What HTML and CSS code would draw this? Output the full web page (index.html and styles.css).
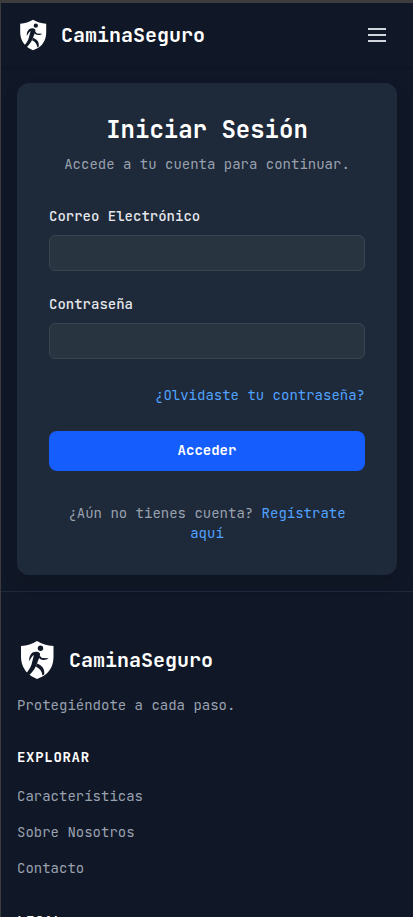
FILE: index.html
```html
<!DOCTYPE html>
<html lang="es">
<head>
  <meta charset="utf-8">
  <meta name="viewport" content="width=device-width, initial-scale=1">
  <title>CaminaSeguro</title>
  <link rel="stylesheet" href="styles.css">
</head>
<body>
  <svg width="0" height="0" class="sprite" aria-hidden="true">
    <symbol id="logo" viewBox="0 0 40 40">
      <path class="shield" d="M20 1C25 4 30 5.6 36.5 6V17C36.5 27 31 34 25.500 36.500L20 39L15 36.500C9 33 4 26 4 17V6C10.500 5.600 15 4 20 1Z"/>
      <circle class="figure" cx="23.500" cy="8.300" r="2.700"/>
      <path class="figure" d="M15.500 12.500C18 11.300 21 11.300 22.500 12.800C23.500 14 22.800 16 22.300 17.500L20 23.500C18.500 28 14 35 10 36.300L5 37C9 34.500 13 29 14.500 24.500C15.300 21.500 16 18.500 17 15C15.300 16 14.300 17.500 12.300 21.200C11.700 18 13 14.500 15.500 12.500Z"/>
      <path class="figure" d="M22.500 15.500L25 18L31.500 18.300C30 19.800 26 20.500 23.500 19.300L21.500 17.500Z"/>
      <path class="figure" d="M20 23.500C25 25.500 28 28.500 27.200 34.500L25.500 35.500C25 31.500 23 28.500 18.800 26.500Z"/>
    </symbol>
  </svg>

  <header class="header">
    <a class="brand" href="#">
      <svg class="logo" aria-hidden="true"><use href="#logo"/></svg>
      <span>CaminaSeguro</span>
    </a>
    <button class="menu" type="button" aria-label="Menú">
      <svg viewBox="0 0 24 24" width="24" height="24" aria-hidden="true"><path d="M3 6h18M3 12h18M3 18h18"/></svg>
    </button>
  </header>

  <main class="main">
    <section class="card">
      <h1>Iniciar Sesión</h1>
      <p class="subtitle">Accede a tu cuenta para continuar.</p>
      <form class="form">
        <div class="field">
          <label for="email">Correo Electrónico</label>
          <input id="email" type="email">
        </div>
        <div class="field">
          <label for="password">Contraseña</label>
          <input id="password" type="password">
        </div>
        <div class="forgot"><a href="#">¿Olvidaste tu contraseña?</a></div>
        <button class="submit" type="submit">Acceder</button>
      </form>
      <p class="signup">¿Aún no tienes cuenta? <a href="#">Regístrate aquí</a></p>
    </section>
  </main>

  <footer class="footer">
    <a class="brand brand-large" href="#">
      <svg class="logo" aria-hidden="true"><use href="#logo"/></svg>
      <span>CaminaSeguro</span>
    </a>
    <p class="tagline">Protegiéndote a cada paso.</p>
    <nav class="group">
      <h2>Explorar</h2>
      <ul>
        <li><a href="#">Características</a></li>
        <li><a href="#">Sobre Nosotros</a></li>
        <li><a href="#">Contacto</a></li>
      </ul>
    </nav>
    <section class="group">
      <h2>Legal</h2>
    </section>
  </footer>
</body>
</html>
```

FILE: styles.css
```css
*,
*::before,
*::after {
  box-sizing: border-box;
}

body {
  margin: 0;
  border-top: 3px solid #3c3c3c;
  border-left: 1px solid #3c3c3c;
  background: #101726;
  color: #fff;
  font-family: "JetBrains Mono", "DejaVu Sans Mono", "Liberation Mono", monospace;
  font-size: 14px;
  line-height: 18px;
}

h1,
h2,
p,
ul {
  margin: 0;
  padding: 0;
}

a {
  color: #51a2ff;
  text-decoration: none;
}

button,
input {
  font: inherit;
}

.sprite {
  display: block;
}

.shield {
  fill: #fff;
}

.figure {
  fill: #101726;
}

.header {
  display: flex;
  align-items: center;
  justify-content: space-between;
  height: 64px;
  padding: 0 16px;
  box-shadow: 0 1px 2px rgba(0, 0, 0, 0.15);
}

.brand {
  display: flex;
  align-items: center;
  gap: 12px;
  color: #fff;
  font-size: 20px;
  font-weight: 700;
  line-height: 28px;
}

.logo {
  width: 32px;
  height: 32px;
}

.brand-large .logo {
  width: 40px;
  height: 40px;
}

.menu {
  display: flex;
  padding: 8px;
  border: 0;
  background: none;
  color: #d1d5dc;
}

.menu path {
  fill: none;
  stroke: currentColor;
  stroke-width: 2;
}

.main {
  padding: 16px;
}

.card {
  max-width: 448px;
  margin: 0 auto;
  padding: 32px;
  border-radius: 12px;
  background: #1e2939;
  box-shadow: 0 8px 16px rgba(0, 0, 0, 0.1);
  text-align: center;
}

h1 {
  font-size: 24px;
  font-weight: 700;
  line-height: 30px;
}

.subtitle {
  margin-top: 10px;
  color: #99a1af;
}

.form {
  display: flex;
  flex-direction: column;
  gap: 24px;
  margin: 34px 0 32px;
  text-align: left;
}

.field {
  display: flex;
  flex-direction: column;
  gap: 10px;
}

.field label {
  color: #e5e7eb;
  font-weight: 500;
}

.field input {
  width: 100%;
  height: 36px;
  padding: 0 12px;
  border: 1px solid #3a4553;
  border-radius: 6px;
  background: #293441;
  color: #fff;
}

.forgot {
  line-height: 24px;
  text-align: right;
}

.submit {
  height: 40px;
  padding: 0 16px 2px;
  border: 0;
  border-radius: 8px;
  background: #155dfc;
  color: #fff;
  font-weight: 600;
}

.signup {
  color: #99a1af;
  line-height: 20px;
}

.footer {
  padding: 48px 16px;
  border-top: 1px solid #1e2939;
}

.tagline {
  margin: 16px 0 34px;
  color: #99a1af;
}

.group {
  margin-bottom: 32px;
}

.group h2 {
  font-size: 14px;
  font-weight: 600;
  letter-spacing: 0.05em;
  text-transform: uppercase;
}

.group ul {
  display: flex;
  flex-direction: column;
  gap: 12px;
  margin-top: 18px;
  list-style: none;
}

.group li {
  line-height: 24px;
}

.group li a {
  color: #99a1af;
}
```
